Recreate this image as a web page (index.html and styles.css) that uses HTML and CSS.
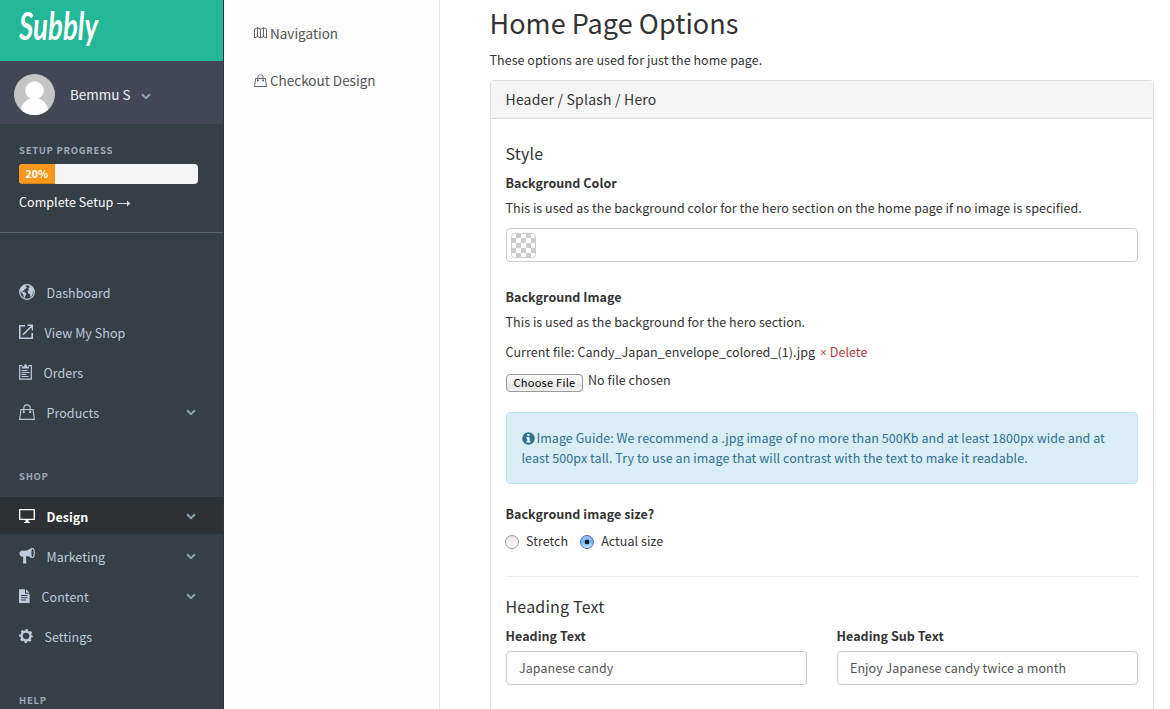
FILE: index.html
```
<!DOCTYPE html>
<html lang="en">
<head>
<meta charset="utf-8">
<title>Home Page Options</title>
<link rel="stylesheet" href="styles.css">
</head>
<body>
<svg class="defs" width="0" height="0">
  <symbol id="chev" viewBox="0 0 10 7"><path d="M1 1.3 5 5.2 9 1.3" fill="none" stroke="currentColor" stroke-width="2"/></symbol>
  <symbol id="bag" viewBox="0 0 16 16"><path d="M2 5.5H14L15.4 15.4H.6ZM4.8 8V4.200C4.800-.3 11.200-.3 11.200 4.200V8" fill="none" stroke="currentColor" stroke-width="1.100"/><path d="M3.800 7.500h2v1.500h-2zM10.200 7.500h2v1.500h-2z" fill="currentColor"/></symbol>
</svg>
<div class="app">
  <aside class="sidebar">
    <div class="brand"><svg width="84" height="48"><text class="logo" x="0" y="32" textLength="79" lengthAdjust="spacingAndGlyphs">Subbly</text></svg></div>
    <div class="user">
      <svg width="41" height="41" viewBox="0 0 41 41"><clipPath id="c"><circle cx="20.500" cy="20.500" r="20.500"/></clipPath><g clip-path="url(#c)"><rect width="41" height="41" fill="#c5c5c5"/><circle cx="20.500" cy="16.500" r="9.300" fill="#fff"/><path d="M6 41C6 31 12 24 20.500 24S35 31 35 41Z" fill="#fff"/></g></svg>
      <span class="name">Bemmu S</span><svg class="chev" width="10" height="7"><use href="#chev"/></svg>
    </div>
    <div class="setup">
      <div class="caps">SETUP PROGRESS</div>
      <div class="progress"><div class="bar" style="width:20%">20%</div></div>
      <div class="complete">Complete Setup <svg width="14" height="8" viewBox="0 0 14 8"><path d="M0 4.500H13" fill="none" stroke="#d5dadd"/><path d="M10 1.500 13.300 4.500 10 7.500Z" fill="#d5dadd"/></svg></div>
    </div>
    <nav class="menu first">
      <a class="g16"><svg width="16" height="16" viewBox="0 0 16 16"><circle cx="8" cy="8" r="7.300" fill="none" stroke="currentColor" stroke-width="1.300"/><path d="M2 4 5 1.200 7.500 1 6.500 2.500 8 3.300 6.500 5 5 5.500 5.500 7 3.800 6.500 3.300 7.800 6 8.200 7.500 9.700 6.500 11.500 5.800 14 4.500 13 4.300 10.500 2.600 8.500 1 7ZM9.500 1.500 13.500 3.500 15.200 7 14.500 8 13.700 7.200 14 9.500 12.500 12.500 11.300 13 11 10.200 9 9.300 8.700 7 10 5.700 9.300 4.500 10.700 3.300Z" fill="currentColor"/></svg><span>Dashboard</span></a>
      <a class="g14"><svg width="14" height="16" viewBox="0 0 14 16"><path d="M6 1.700H.8V14.200H13.200V9M8.500 1.200H13.500V6.500M13 1.700 4 10.700" fill="none" stroke="currentColor" stroke-width="1.600"/></svg><span>View My Shop</span></a>
      <a class="g13"><svg width="13" height="16" viewBox="0 0 13 16"><path d="M3.500 1.700H.7V15.200H12.300V1.700H9.500" fill="none" stroke="currentColor" stroke-width="1.200"/><path d="M3 4.500V2.500H5Q5 0 6.500 0T8 2.500H10V4.500ZM2.500 6h6v1h-6zM2.500 8h8v1h-8zM2.500 10h5v1h-5zM2.500 12h7v1h-7z" fill="currentColor"/></svg><span>Orders</span></a>
      <a class="g16"><svg width="16" height="16"><use href="#bag"/></svg><span>Products</span><svg class="chev" width="10" height="7"><use href="#chev"/></svg></a>
    </nav>
    <div class="caps head">SHOP</div>
    <nav class="menu shop">
      <a class="g16 active"><svg width="16" height="16" viewBox="0 0 16 16"><path d="M.7 1.700H15.300V11.300H.7Z" fill="none" stroke="currentColor" stroke-width="1.300"/><path d="M6.500 12h3v1.500l1.500 1v.5h-6v-.5l1.500-1z" fill="currentColor"/></svg><span>Design</span><svg class="chev" width="10" height="7"><use href="#chev"/></svg></a>
      <a class="g16"><svg width="16" height="16" viewBox="0 0 16 16"><path d="M.5 4 3 2.500C7 3 10 2 12.500 0V10C10.500 8.500 9 8.200 7 8.300L7.300 15.500H4L4.200 8.700 2 8.500.5 6.500Z" fill="currentColor"/><ellipse cx="13.300" cy="5" rx="2" ry="4.500" fill="none" stroke="currentColor" stroke-width="1.200"/></svg><span>Marketing</span><svg class="chev" width="10" height="7"><use href="#chev"/></svg></a>
      <a class="g11"><svg width="11" height="16" viewBox="0 0 11 16"><path d="M0 1.200H6V5.800H10.600V15H0ZM7 1.200 10.600 4.800H7ZM2 7v1h6.500V7ZM2 9.300v1h6.500v-1ZM2 11.600v1h5v-1Z" fill="currentColor" fill-rule="evenodd"/></svg><span>Content</span><svg class="chev" width="10" height="7"><use href="#chev"/></svg></a>
      <a class="g14"><svg width="14" height="16" viewBox="0 0 14 16"><circle cx="7" cy="8" r="4.500" fill="none" stroke="currentColor" stroke-width="2.400"/><circle cx="7" cy="8" r="5.900" fill="none" stroke="currentColor" stroke-width="2" stroke-dasharray="2.317 2.317" stroke-dashoffset="1.150"/></svg><span>Settings</span></a>
    </nav>
    <div class="caps help">HELP</div>
  </aside>
  <aside class="sub">
    <a><svg width="13" height="12" viewBox="0 0 13 12"><path d="M.5 2.200 3.500.7 6.500 2.200 9.500.7 12.500 2.200V11L9.500 9.500 6.500 11 3.500 9.500.5 11ZM3.500.7V9.500M6.500 2.200V11M9.500.7V9.500" fill="none" stroke="currentColor" stroke-width=".9"/></svg>Navigation</a>
    <a><svg width="13" height="13" viewBox="0 0 16 16"><use href="#bag" width="16" height="16"/></svg>Checkout Design</a>
  </aside>
  <main>
    <h1>Home Page Options</h1>
    <p class="lead">These options are used for just the home page.</p>
    <section class="panel">
      <header>Header / Splash / Hero</header>
      <div class="body">
        <h2>Style</h2>
        <label class="lb">Background Color</label>
        <p class="p1">This is used as the background color for the hero section on the home page if no image is specified.</p>
        <div class="field color"><svg width="25" height="25" viewBox="0 0 25 25"><defs><pattern id="ck" width="10" height="10" patternUnits="userSpaceOnUse"><path d="M5 0h5v5H5zM0 5h5v5H0z" fill="#ccc"/></pattern></defs><rect x=".5" y=".5" width="24" height="24" rx="3" fill="url(#ck)" stroke="#ccc"/></svg></div>
        <label class="lb img">Background Image</label>
        <p class="p2">This is used as the background for the hero section.</p>
        <p class="p3">Current file: Candy_Japan_envelope_colored_(1).jpg <a class="del"><span class="x">×</span> Delete</a></p>
        <div class="file"><span class="btn">Choose File</span><span class="nofile">No file chosen</span></div>
        <div class="alert"><svg width="13" height="13" viewBox="0 0 13 13"><circle cx="6.500" cy="6.500" r="6.200" fill="currentColor"/><path d="M5.300 2h2.200v2H5.300zM4.300 5.200h3.300v4h1v1.300H4.300V9.200h1V6.400h-1z" fill="#fff"/></svg>Image Guide: We recommend a .jpg image of no more than 500Kb and at least 1800px wide and at<br><span class="l2">least 500px tall. Try to use an image that will contrast with the text to make it readable.</span></div>
        <label class="lb">Background image size?</label>
        <div class="radios"><i class="radio"></i><span class="st">Stretch</span><i class="radio on"></i><span class="ac">Actual size</span></div>
        <hr>
        <h2>Heading Text</h2>
        <div class="cols">
          <div><label class="lb">Heading Text</label><div class="field"><span class="v1">Japanese candy</span></div></div>
          <div><label class="lb">Heading Sub Text</label><div class="field"><span class="v2">Enjoy Japanese candy twice a month</span></div></div>
        </div>
      </div>
    </section>
  </main>
</div>
</body>
</html>
```
FILE: styles.css
```
* { box-sizing: border-box; }
body { margin: 0; overflow: hidden; font: 12.5px/20px "Noto Sans CJK SC", sans-serif; letter-spacing: .045px; color: #333; background: #fff; }
.defs { position: absolute; }
.app { display: flex; height: 709px; overflow: hidden; }
.sidebar { width: 224px; flex: none; background: #363e46; border-right: 1px solid #2f353c; color: #bdcbdb; }
.brand { height: 61px; background: #22b795; padding: 8px 0 0 19px; }
.brand svg { display: block; overflow: visible; }
.logo { font: italic bold 39px Lato, sans-serif; fill: #fff; letter-spacing: 0; }
.user { height: 63px; background: #424753; display: flex; align-items: center; padding: 3px 0 0 14px; color: #f2f4f7; font-size: 13.5px; letter-spacing: 0; }
.user .name { margin-left: 15px; }
.user .chev { color: #8fa2b5; margin: 5px 0 0 10px; }
.setup { height: 109px; padding: 16px 25px 0 19px; border-bottom: 1px solid #566370; }
.caps { font-size: 9.5px; font-weight: bold; letter-spacing: .7px; color: #9ea9b7; }
.progress { height: 20px; margin-top: 4px; border-radius: 4px; background: #f5f5f5; overflow: hidden; }
.bar { height: 20px; background: #f8981f; color: #fff; font-size: 10.5px; font-weight: bold; text-align: center; box-shadow: inset 0 -1px 0 rgba(0,0,0,.15); }
.complete { margin-top: 8px; color: #fff; white-space: nowrap; }
.complete svg { margin-left: 1px; }
.menu { display: flex; flex-direction: column; gap: 3px; }
.menu.first { padding-top: 41px; }
.menu a { display: flex; align-items: center; height: 37px; padding: 0 27px 0 19px; }
.menu a > svg:first-child { margin-top: -1px; flex: none; }
.menu span { margin-left: 11.5px; }
.menu .chev { margin: -1px 0 0 auto; color: #91a4b7; }
.menu.shop span { padding-top: 2px; }
.menu.shop a > svg:first-child { margin-top: 0; }
.menu.shop .chev { margin-top: 1px; }
.head { padding: 35px 0 0 19px; height: 66px; }
.menu a.active { background: #2d3134; color: #fff; font-weight: bold; }
.help { padding: 36px 0 0 19px; }
.sub { width: 216px; flex: none; border-right: 1px solid #e5e5e5; background: #fcfcfc; padding: 23px 0 0 30px; color: #555; font-size: 13.5px; letter-spacing: 0; display: flex; flex-direction: column; gap: 27px; }
.sub a { display: flex; align-items: center; gap: 3px; }
main { width: 714px; padding-left: 50px; }
h1, h2, p { margin: 0; font-weight: normal; }
h1 { font-size: 27px; line-height: 40px; padding-top: 3px; margin-left: -.5px; }
.lead { margin: 7px 0 0 -.5px; }
.panel { margin-top: 10px; border: 1px solid #ddd; border-radius: 4px; height: 700px; overflow: hidden; }
.panel header { height: 38px; background: #f5f5f5; border-bottom: 1px solid #ddd; padding: 8px 14.5px; font-size: 14px; letter-spacing: .2px; }
.body { padding: 24px 15px 0; }
h2 { font-size: 16px; line-height: 20px; letter-spacing: .2px; margin-left: -.5px; }
.lb { display: block; font-weight: bold; margin: 10px 0 0 -.5px; }
.p1 { margin: 5px 0 0 -.5px; }
.field { height: 34px; border: 1px solid #ccc; border-radius: 4px; padding: 6px 12px; color: #555; }
.color { margin-top: 10px; padding: 4px; }
.color svg { display: block; }
.lb.img { margin-top: 25px; }
.p2 { margin: 5px 0 0 -.5px; }
.p3 { margin: 10px 0 0 -.5px; }
.del { color: #b33c39; margin-left: 2px; }
.x { font-family: "Open Sans", sans-serif; font-size: 12px; line-height: 12px; }
.file { display: flex; margin-top: 8px; height: 23px; gap: 5px; }
.btn { width: 77px; height: 18px; margin-top: 4px; border: 1px solid #989898; border-radius: 4px; background: linear-gradient(#fff, #eee 55%, #e3e3e3 56%, #f1f1f1); color: #000; font-size: 11px; line-height: 15px; letter-spacing: .25px; text-align: center; }
.alert { margin-top: 19px; height: 72px; padding: 15px 14.5px; border: 1px solid #bce8f1; border-radius: 4px; background: #d9edf7; color: #31708f; white-space: nowrap; }
.alert svg { vertical-align: -2px; margin-right: 2px; }
.l2 { letter-spacing: .07px; }
.alert + .lb { margin-top: 20px; }
.radios { display: flex; align-items: center; margin: 8px 0 0 -1px; height: 20px; }
.radio { width: 14px; height: 14px; border-radius: 50%; border: 1px solid #989898; background: linear-gradient(#e6e6e6, #fff); }
.radio.on { border-color: #5a5fae; background: radial-gradient(circle, #091833 0 2px, transparent 2.7px), linear-gradient(#9cc4f3, #6fb5f3 50%, #c0f0ff); }
.radios span { margin-top: -2px; }
.st { margin: 0 12px 0 7px; }
.ac { margin-left: 7px; }
hr { margin: 24px 0 19px; border: 0; border-top: 1px solid #eee; }
.cols { display: grid; grid-template-columns: 301px 301px; gap: 30px; }
.cols .lb { margin-top: 10px; }
.cols .field { margin-top: 5px; }
```
